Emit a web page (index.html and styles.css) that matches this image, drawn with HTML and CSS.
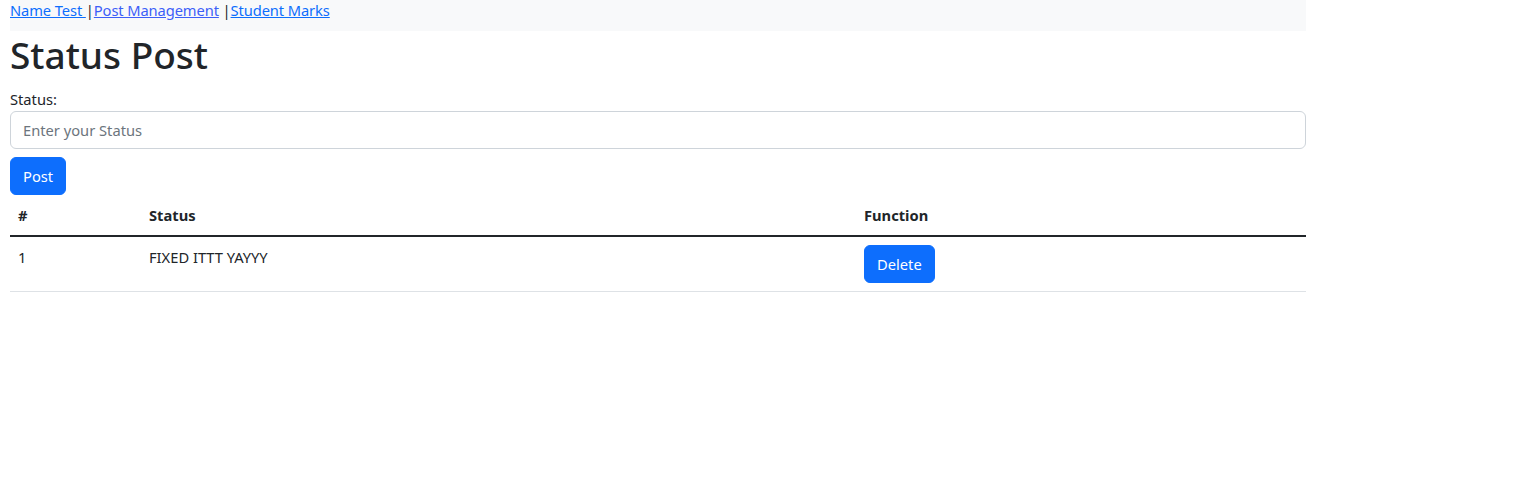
FILE: index.html
```html
<!DOCTYPE html>
<html lang="en">
<head>
<meta charset="utf-8">
<title>Status Post</title>
<link rel="stylesheet" href="styles.css">
</head>
<body>
<div class="page">
  <nav class="topnav">
    <a href="#" class="link">Name Test </a>|<a href="#" class="link visited">Post Management</a> |<a href="#" class="link">Student Marks</a>
  </nav>
  <h1 class="title">Status Post</h1>
  <form class="post-form">
    <label class="label" for="status">Status:</label>
    <input class="input" id="status" type="text" placeholder="Enter your Status">
    <button class="btn" type="button">Post</button>
  </form>
  <table class="table">
    <thead>
      <tr>
        <th class="col-num">#</th>
        <th class="col-status">Status</th>
        <th class="col-fn">Function</th>
      </tr>
    </thead>
    <tbody>
      <tr>
        <td>1</td>
        <td>FIXED ITTT YAYYY</td>
        <td><button class="btn" type="button">Delete</button></td>
      </tr>
    </tbody>
  </table>
</div>
</body>
</html>
```
FILE: styles.css
```css
* { box-sizing: border-box; }
html, body { margin: 0; padding: 0; background: #fff; }
body {
  font-family: "Segoe UI", "Noto Sans", sans-serif;
  font-size: 14.7px;
  line-height: 24px;
  color: #212529;
}
.page {
  width: 1296px;
  margin-left: 10px;
}
.topnav {
  background: #f8f9fa;
  height: 31px;
  line-height: 21px;
  letter-spacing: -0.1px;
  color: #212529;
}
.link { color: #0d6efd; text-decoration: underline; }
.link.visited { color: #3d5ff8; }
.title {
  margin: 0 0 8px;
  font-size: 37px;
  font-weight: 500;
  line-height: 48px;
}
.post-form { margin: 0; }
.label { display: block; }
.input {
  display: block;
  width: 100%;
  height: 38px;
  margin: 0 0 8px;
  padding: 6px 12px;
  font: inherit;
  color: #212529;
  border: 1px solid #ced4da;
  border-radius: 6px;
  background: #fff;
}
.input::placeholder { color: #6c757d; }
.btn {
  display: inline-block;
  height: 38px;
  padding: 6px 12px;
  font: inherit;
  color: #fff;
  background: #0d6efd;
  border: 1px solid #0d6efd;
  border-radius: 6px;
  cursor: pointer;
}
.table {
  width: 100%;
  border-collapse: collapse;
  margin: 0;
}
.table th, .table td {
  padding: 8px;
  text-align: left;
  vertical-align: top;
  border-bottom: 1px solid #dee2e6;
}
.table thead th {
  font-weight: 700;
  vertical-align: bottom;
  border-bottom: 2px solid #212529;
}
.col-num { width: 131px; }
.col-status { width: 715px; }
.col-fn { width: 450px; }
```
